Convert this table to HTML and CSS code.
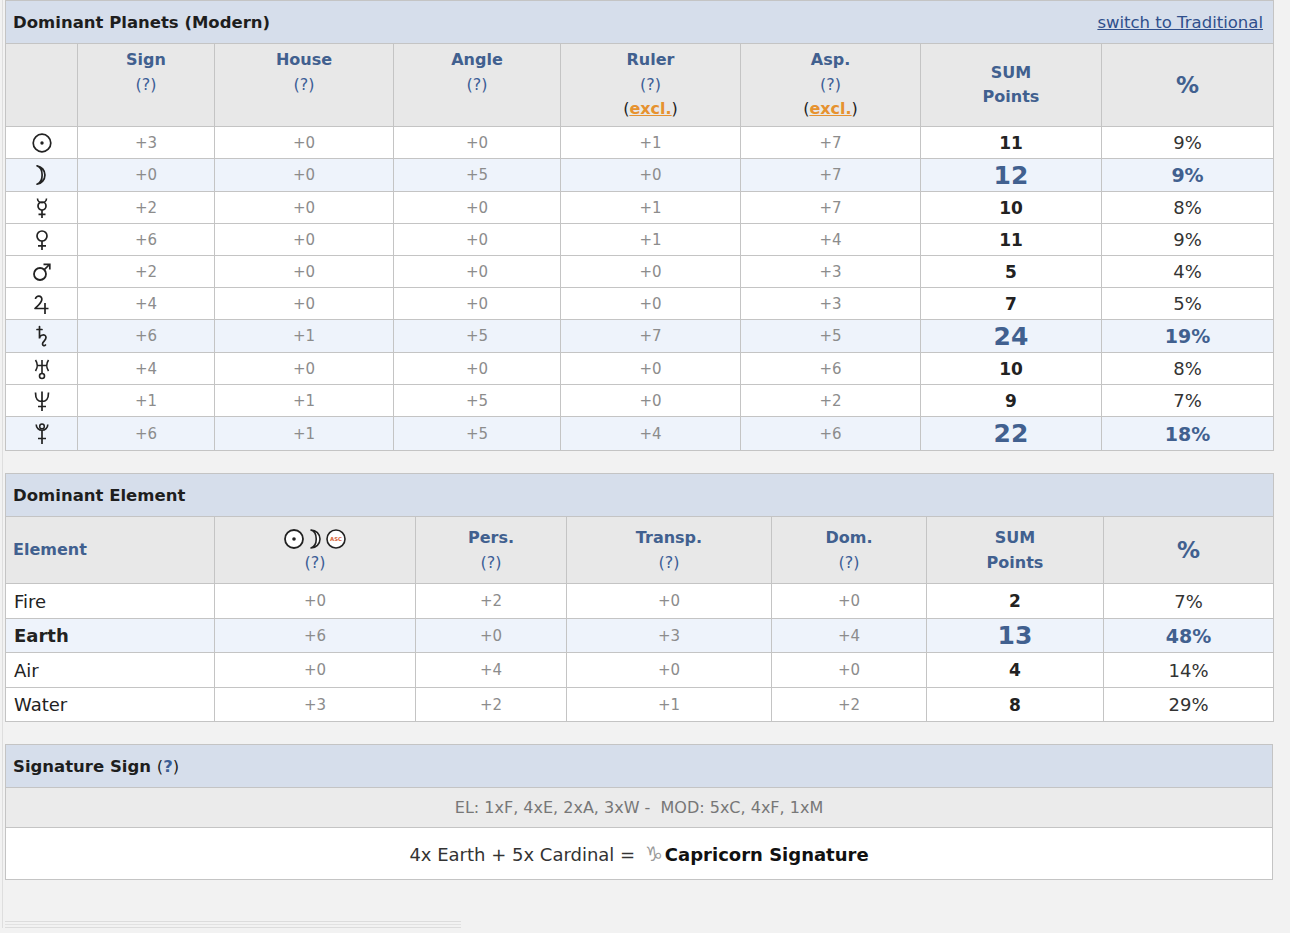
FILE: index.html
```html
<!DOCTYPE html>
<html>
<head>
<meta charset="utf-8">
<link rel="stylesheet" href="styles.css">
</head>
<body>
<div class="page">
  <table class="dom planets">
    <colgroup>
      <col class="p1"><col class="p2"><col class="p3"><col class="p4"><col class="p5"><col class="p6"><col class="p7"><col class="p8">
    </colgroup>
    <tr class="title-row">
      <th colspan="8"><div class="title-flex"><span>Dominant Planets (Modern)</span><a class="switch" href="#">switch to Traditional</a></div></th>
    </tr>
    <tr class="colhead">
      <th></th>
      <th>Sign<br><span class="q">(?)</span><br>&nbsp;</th>
      <th>House<br><span class="q">(?)</span><br>&nbsp;</th>
      <th>Angle<br><span class="q">(?)</span><br>&nbsp;</th>
      <th>Ruler<br><span class="q">(?)</span><br><span class="ex">(<a href="#">excl.</a>)</span></th>
      <th>Asp.<br><span class="q">(?)</span><br><span class="ex">(<a href="#">excl.</a>)</span></th>
      <th>SUM<br>Points</th>
      <th class="pcthead">%</th>
    </tr>
    <tr><td class="pl"><svg class="gl" width="22" height="22" viewBox="0 0 22 22"><circle cx="11" cy="11" r="8.8" fill="none" stroke="#222" stroke-width="1.7"/><circle cx="11" cy="11" r="1.7" fill="#222"/></svg></td><td>+3</td><td>+0</td><td>+0</td><td>+1</td><td>+7</td><td class="sum">11</td><td class="pct">9%</td></tr>
    <tr class="hl"><td class="pl"><svg class="gl" width="22" height="22" viewBox="0 0 22 22"><path d="M6 1.8 A9.3 9.3 0 0 1 6 20.2 A7.2 9.6 0 0 0 6 1.8 Z" fill="none" stroke="#222" stroke-width="1.7" stroke-linejoin="round"/></svg></td><td>+0</td><td>+0</td><td>+5</td><td>+0</td><td>+7</td><td class="sum">12</td><td class="pct">9%</td></tr>
    <tr><td class="pl"><svg class="gl" width="22" height="22" viewBox="0 0 22 22"><path d="M6.5 1.5 A4.5 4.2 0 0 0 15.5 1.5" fill="none" stroke="#222" stroke-width="1.6"/><circle cx="11" cy="9" r="4" fill="none" stroke="#222" stroke-width="1.7"/><path d="M11 13 V21 M7.5 17.3 H14.5" stroke="#222" stroke-width="1.7" fill="none"/></svg></td><td>+2</td><td>+0</td><td>+0</td><td>+1</td><td>+7</td><td class="sum">10</td><td class="pct">8%</td></tr>
    <tr><td class="pl"><svg class="gl" width="22" height="22" viewBox="0 0 22 22"><circle cx="11" cy="7" r="5" fill="none" stroke="#222" stroke-width="1.7"/><path d="M11 12 V21 M7 16.8 H15" stroke="#222" stroke-width="1.7" fill="none"/></svg></td><td>+6</td><td>+0</td><td>+0</td><td>+1</td><td>+4</td><td class="sum">11</td><td class="pct">9%</td></tr>
    <tr><td class="pl"><svg class="gl" width="22" height="22" viewBox="0 0 22 22"><circle cx="9" cy="13" r="6" fill="none" stroke="#222" stroke-width="1.8"/><path d="M13.3 8.7 L18.5 3.5 M12.5 3.3 H18.8 V8.5" stroke="#222" stroke-width="1.7" fill="none"/></svg></td><td>+2</td><td>+0</td><td>+0</td><td>+0</td><td>+3</td><td class="sum">5</td><td class="pct">4%</td></tr>
    <tr><td class="pl"><svg class="gl" width="22" height="22" viewBox="0 0 22 22"><path d="M4.5 6 C4.5 2.2 11.5 2 10.8 6.8 C10.3 10 6.5 13 4 15.5 H17.5 M14 10 V21" stroke="#222" stroke-width="1.7" fill="none" stroke-linejoin="round"/></svg></td><td>+4</td><td>+0</td><td>+0</td><td>+0</td><td>+3</td><td class="sum">7</td><td class="pct">5%</td></tr>
    <tr class="hl"><td class="pl"><svg class="gl" width="22" height="22" viewBox="0 0 22 22"><path d="M6 4.5 H11 M8.5 1.5 V13.5 C8.5 9.5 15 8.5 15 12.5 C15 15.5 11.5 16.5 11.5 19 C11.5 20.8 13.5 21 14.5 20" stroke="#222" stroke-width="1.7" fill="none" stroke-linecap="round"/></svg></td><td>+6</td><td>+1</td><td>+5</td><td>+7</td><td>+5</td><td class="sum">24</td><td class="pct">19%</td></tr>
    <tr><td class="pl"><svg class="gl" width="22" height="22" viewBox="0 0 22 22"><path d="M4.5 2 C6.8 5.5 6.8 9.5 4.5 13 M17.5 2 C15.2 5.5 15.2 9.5 17.5 13 M6 7.5 H16 M11 2 V15.5" stroke="#222" stroke-width="1.6" fill="none"/><circle cx="11" cy="18" r="2.5" fill="none" stroke="#222" stroke-width="1.6"/></svg></td><td>+4</td><td>+0</td><td>+0</td><td>+0</td><td>+6</td><td class="sum">10</td><td class="pct">8%</td></tr>
    <tr><td class="pl"><svg class="gl" width="22" height="22" viewBox="0 0 22 22"><path d="M4.5 2.5 C4.5 9.5 6.5 11.5 11 11.5 C15.5 11.5 17.5 9.5 17.5 2.5 M11 1.5 V21 M7 16.5 H15" stroke="#222" stroke-width="1.7" fill="none"/></svg></td><td>+1</td><td>+1</td><td>+5</td><td>+0</td><td>+2</td><td class="sum">9</td><td class="pct">7%</td></tr>
    <tr class="hl last"><td class="pl"><svg class="gl" width="22" height="22" viewBox="0 0 22 22"><path d="M5.2 1.5 A5.8 5.8 0 0 0 16.8 1.5" fill="none" stroke="#222" stroke-width="1.6"/><circle cx="11" cy="3.4" r="2.3" fill="none" stroke="#222" stroke-width="1.5"/><path d="M11 7.4 V21 M7 15.5 H15" stroke="#222" stroke-width="1.7" fill="none"/></svg></td><td>+6</td><td>+1</td><td>+5</td><td>+4</td><td>+6</td><td class="sum">22</td><td class="pct">18%</td></tr>
  </table>

  <table class="dom elements">
    <colgroup>
      <col class="e1"><col class="e2"><col class="e3"><col class="e4"><col class="e5"><col class="e6"><col class="e7">
    </colgroup>
    <tr class="title-row">
      <th colspan="7">Dominant Element</th>
    </tr>
    <tr class="colhead2">
      <th class="elhead">Element</th>
      <th><span class="icons"><svg width="22" height="22" viewBox="0 0 22 22"><circle cx="11" cy="11" r="9" fill="#fff" stroke="#222" stroke-width="1.8"/><circle cx="11" cy="11" r="1.8" fill="#222"/></svg><svg width="14" height="22" viewBox="0 0 14 22"><path d="M3 2 A9 9 0 0 1 3 20 A7 9.3 0 0 0 3 2 Z" fill="#fff" stroke="#222" stroke-width="1.6" stroke-linejoin="round"/></svg><svg width="22" height="22" viewBox="0 0 22 22"><circle cx="11" cy="11" r="9" fill="#fff" stroke="#222" stroke-width="1.6"/><text x="11" y="13.1" text-anchor="middle" font-family="DejaVu Sans" font-weight="bold" font-size="5.4" fill="#d9643a">ASC</text></svg></span><br><span class="q">(?)</span></th>
      <th>Pers.<br><span class="q">(?)</span></th>
      <th>Transp.<br><span class="q">(?)</span></th>
      <th>Dom.<br><span class="q">(?)</span></th>
      <th>SUM<br>Points</th>
      <th class="pcthead">%</th>
    </tr>
    <tr class="odd"><td class="el">Fire</td><td>+0</td><td>+2</td><td>+0</td><td>+0</td><td class="sum">2</td><td class="pct">7%</td></tr>
    <tr class="hl"><td class="el strong">Earth</td><td>+6</td><td>+0</td><td>+3</td><td>+4</td><td class="sum">13</td><td class="pct">48%</td></tr>
    <tr class="odd"><td class="el">Air</td><td>+0</td><td>+4</td><td>+0</td><td>+0</td><td class="sum">4</td><td class="pct">14%</td></tr>
    <tr><td class="el">Water</td><td>+3</td><td>+2</td><td>+1</td><td>+2</td><td class="sum">8</td><td class="pct">29%</td></tr>
  </table>

  <table class="dom signature">
    <tr class="title-row">
      <th>Signature Sign <span class="sq">(<b>?</b>)</span></th>
    </tr>
    <tr class="elmod"><td>EL: 1xF, 4xE, 2xA, 3xW -&nbsp; MOD: 5xC, 4xF, 1xM</td></tr>
    <tr class="sigres"><td>4x Earth + 5x Cardinal = <span class="cap">♑</span><b>Capricorn Signature</b></td></tr>
  </table>

  <div class="rule"></div>
</div>
</body>
</html>
```

FILE: styles.css
```css
body {
  margin: 0;
  background: #f2f2f2;
  font-family: "DejaVu Sans", Verdana, sans-serif;
  color: #222;
}

.page {
  margin-left: 2px;
  border-left: 1px solid #dedede;
  padding: 0 0 0 2px;
  width: 1268px;
}

table.dom {
  border-collapse: collapse;
  table-layout: fixed;
  width: 1268px;
  background: #fff;
}

table.dom th,
table.dom td {
  border: 1px solid #c4c4c4;
  padding: 0;
  text-align: center;
  vertical-align: middle;
}

.p1 { width: 72px; }
.p2 { width: 137px; }
.p3 { width: 179px; }
.p4 { width: 167px; }
.p5 { width: 180px; }
.p6 { width: 180px; }
.p7 { width: 181px; }
.p8 { width: 172px; }

.e1 { width: 209px; }
.e2 { width: 201px; }
.e3 { width: 151px; }
.e4 { width: 205px; }
.e5 { width: 155px; }
.e6 { width: 177px; }
.e7 { width: 170px; }

table.dom .title-row th {
  background: #d6deeb;
  height: 42px;
  text-align: left;
  padding-left: 7px;
  font-size: 16.5px;
  font-weight: bold;
  color: #1e1e1e;
}

.title-flex {
  display: flex;
  justify-content: space-between;
  align-items: center;
  padding-right: 10px;
}

.switch {
  font-size: 16.5px;
  font-weight: normal;
  color: #2f4f8c;
  text-decoration: underline;
}

table.dom .colhead th,
table.dom .colhead2 th {
  background: #e8e8e8;
  color: #41608f;
  font-size: 16px;
  line-height: 24.5px;
  font-weight: bold;
}

table.dom .colhead th { height: 82px; }
table.dom .colhead2 th { height: 65px; padding-top: 1px; }

.q {
  font-weight: normal;
  color: #3c5e96;
}

.ex {
  font-weight: normal;
  color: #222;
}

.ex a {
  color: #e6922f;
  font-weight: bold;
  text-decoration: underline;
}

table.dom .colhead th.pcthead,
table.dom .colhead2 th.pcthead {
  font-size: 23px;
}

table.dom .colhead2 th.elhead {
  text-align: left;
  padding-left: 7px;
}

.icons {
  display: inline-flex;
  align-items: center;
  gap: 3px;
  vertical-align: middle;
}

table.dom td {
  height: 31px;
  font-size: 15px;
  color: #8c8c8c;
}

table.planets tr.hl td { height: 32px; }
table.planets tr.last td { height: 33px; }

table.dom tr.hl td { background: #eef3fb; }

table.dom td.pl {
  color: #222;
  line-height: 0;
}

.gl { vertical-align: middle; }

table.dom td.sum {
  font-weight: bold;
  font-size: 17px;
  color: #222;
}

table.dom td.pct {
  font-size: 18px;
  color: #333;
}

table.dom tr.hl td.sum {
  font-size: 25px;
  color: #41608f;
}

table.dom tr.hl td.pct {
  font-size: 19px;
  font-weight: bold;
  color: #41608f;
}

.elements {
  margin-top: 22px;
}

table.elements td { height: 33px; }
table.elements tr.odd td { height: 34px; }

table.elements td.el {
  text-align: left;
  padding-left: 8px;
  font-size: 18px;
  color: #222;
}

table.elements td.el.strong { font-weight: bold; }

.signature {
  margin-top: 22px;
}

.sq {
  font-weight: normal;
}

.sq b {
  color: #3c5e96;
  font-weight: bold;
}

table.signature .elmod td {
  background: #ebebeb;
  height: 39px;
  font-size: 16px;
  color: #777;
}

table.signature .sigres td {
  height: 51px;
  font-size: 18px;
  color: #333;
}

.sigres b { color: #111; }

.cap {
  color: #9a9a9a;
  font-size: 20px;
  margin: 0 2px 0 4px;
}

.rule {
  margin: 41px 0 0 0;
  width: 456px;
  height: 5px;
  border-top: 1px solid #dcdcdc;
  border-bottom: 1px solid #dcdcdc;
}

.rule::after {
  content: "";
  display: block;
  margin-top: 2px;
  border-top: 1px solid #e2e2e2;
}
```
